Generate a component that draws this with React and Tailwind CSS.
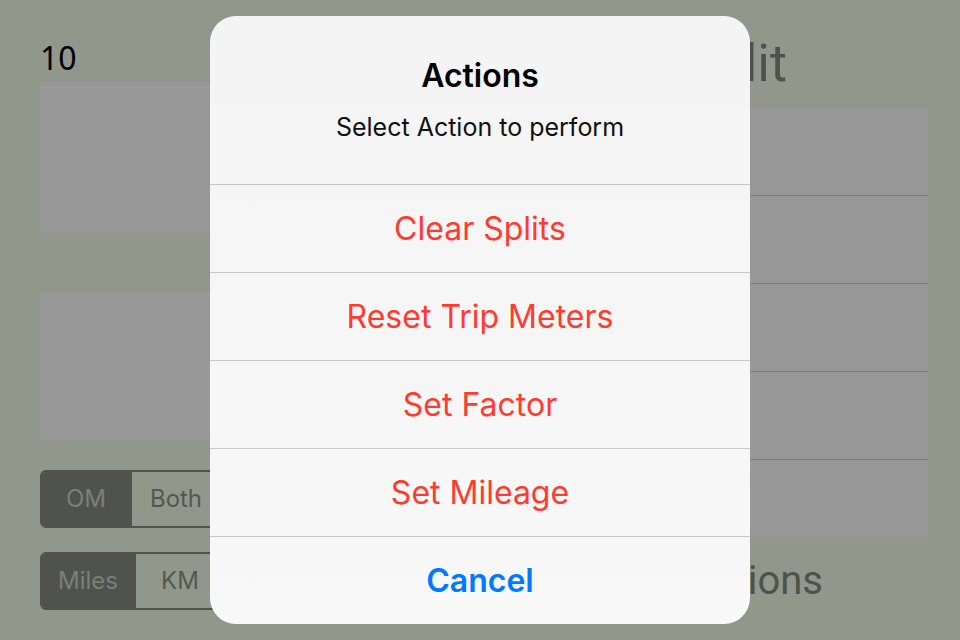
import React from 'react';

const actions = ['Clear Splits', 'Reset Trip Meters', 'Set Factor', 'Set Mileage'];

function Segmented({ items, active }) {
  return (
    <div className="flex h-[58px] w-[300px] rounded-[6px] border-2 border-[#50524e] overflow-hidden">
      {items.map((it, i) => (
        <div key={it.label}
          className={
            'flex items-center justify-center text-[24px] ' +
            (i === active ? 'bg-[#50524e] text-[#7c7f79]' : 'text-[#555752] border-l-2 border-[#50524e]')
          }
          style={{ width: it.w }}>
          {it.label}
        </div>
      ))}
    </div>
  );
}

export default function App() {
  return (
    <div className="relative h-[640px] w-[960px] overflow-hidden bg-[#92978b] font-['Inter',sans-serif]">
      <div className="flex justify-between pl-10 pr-8">
        {/* left column */}
        <div className="flex w-[420px] flex-col">
          <div className="h-[82px] pt-[40px] font-['Noto_Sans',sans-serif] text-[32px] leading-[36px] text-black">10</div>
          <div className="h-[151px] bg-[#989898]" />
          <div className="mt-[59px] h-[147px] bg-[#989898]" />
          <div className="mt-[31px]">
            <Segmented active={0} items={[{ label: 'OM', w: 88 }, { label: 'Both', w: 90 }, { label: 'TM', w: 118 }]} />
          </div>
          <div className="mt-[24px]">
            <Segmented active={0} items={[{ label: 'Miles', w: 92 }, { label: 'KM', w: 90 }, { label: 'Both', w: 114 }]} />
          </div>
        </div>

        {/* right column */}
        <div className="flex w-[390px] flex-col">
          <div className="h-[108px] pr-[141px] pt-[34px] text-right font-['Roboto',sans-serif] text-[52px] leading-[60px] text-[#4f514d]">
            Split
          </div>
          <div className="flex flex-col bg-[#989898]">
            <div className="h-[87px]" />
            <div className="h-[88px] border-t border-[#7f7f7f]" />
            <div className="h-[88px] border-t border-[#7f7f7f]" />
            <div className="h-[88px] border-t border-[#7f7f7f]" />
            <div className="h-[78px] border-t border-[#7f7f7f]" />
          </div>
          <div className="mt-[20px] pr-[105px] text-right font-['Roboto',sans-serif] text-[40px] leading-[48px] text-[#4f514d]">
            Options
          </div>
        </div>
      </div>

      {/* action sheet */}
      <div className="absolute left-[210px] top-[16px] flex h-[608px] w-[540px] flex-col overflow-hidden rounded-[26px] bg-gradient-to-b from-[#f4f4f4] to-[#f8f8f8]">
        <div className="flex h-[168px] flex-col items-center pt-[40px]">
          <div className="text-[32px] font-semibold leading-[40px] text-black">Actions</div>
          <div className="mt-[16px] text-[25px] leading-[30px] text-[#111]">Select Action to perform</div>
        </div>
        {actions.map(a => (
          <div key={a} className="flex h-[88px] items-center justify-center border-t border-[#c8c8c8] text-[32px] text-[#ff3b30]">
            {a}
          </div>
        ))}
        <div className="flex flex-1 items-center justify-center border-t border-[#c8c8c8] text-[32px] font-semibold text-[#007aff]">
          Cancel
        </div>
      </div>
    </div>
  );
}
